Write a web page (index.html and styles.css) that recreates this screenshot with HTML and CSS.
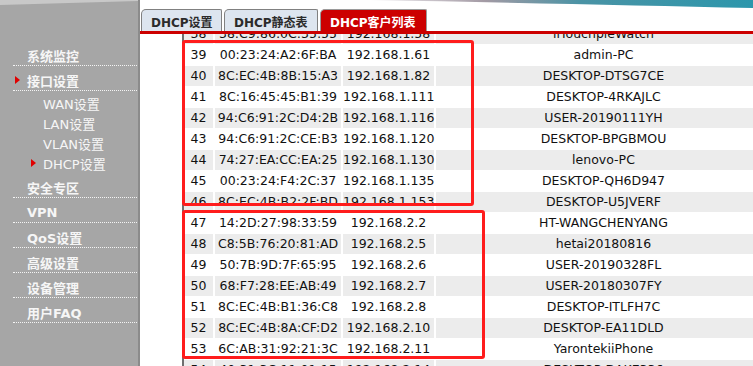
FILE: index.html
```html
<!DOCTYPE html>
<html lang="zh-CN">
<head>
    <meta charset="UTF-8">
    <title>DHCP客户列表</title>
    <link rel="stylesheet" href="styles.css">
</head>
<body>
    <div class="side">
        <svg class="side-deco" width="138" height="6" viewBox="0 0 138 6"><polygon points="0,0 138,0 138,1 0,5" fill="#c8c8c8"/></svg>
        <ul class="menu">
            <li class="menu-item">系统监控</li>
            <li class="menu-item arrow">接口设置</li>
            <li class="sub">
                <div class="sub-item">WAN设置</div>
                <div class="sub-item">LAN设置</div>
                <div class="sub-item">VLAN设置</div>
                <div class="sub-item arrow">DHCP设置</div>
            </li>
            <li class="menu-item">安全专区</li>
            <li class="menu-item">VPN</li>
            <li class="menu-item">QoS设置</li>
            <li class="menu-item">高级设置</li>
            <li class="menu-item">设备管理</li>
            <li class="menu-item">用户FAQ</li>
        </ul>
    </div>
    <div class="main">
        <svg class="banner" width="613" height="9" viewBox="0 0 613 9">
            <defs>
                <linearGradient id="bn" x1="0" y1="0" x2="1" y2="0">
                    <stop offset="0" stop-color="#f2f0f3"/>
                    <stop offset="0.3" stop-color="#a39aa4"/>
                    <stop offset="0.55" stop-color="#4a93a5"/>
                    <stop offset="1" stop-color="#2c97ac"/>
                </linearGradient>
            </defs>
            <path d="M230 0 L613 0 L613 8 Q440 4 230 0 Z" fill="url(#bn)"/>
        </svg>
        <div class="tabs">
            <div class="tab t1">DHCP设置</div>
            <div class="tab t2">DHCP静态表</div>
            <div class="tab t3 active">DHCP客户列表</div>
        </div>
        <div class="tab-line"></div>
        <div class="content">
            <div class="gutter"></div>
            <div class="frame">
                <table class="clients">
                    <tbody>
                        <tr><td>38</td><td>38:C9:86:0C:35:55</td><td>192.168.1.58</td><td>liTouchpleWatch</td></tr>
                        <tr><td>39</td><td>00:23:24:A2:6F:BA</td><td>192.168.1.61</td><td>admin-PC</td></tr>
                        <tr><td>40</td><td>8C:EC:4B:8B:15:A3</td><td>192.168.1.82</td><td>DESKTOP-DTSG7CE</td></tr>
                        <tr><td>41</td><td>8C:16:45:45:B1:39</td><td>192.168.1.111</td><td>DESKTOP-4RKAJLC</td></tr>
                        <tr><td>42</td><td>94:C6:91:2C:D4:2B</td><td>192.168.1.116</td><td>USER-20190111YH</td></tr>
                        <tr><td>43</td><td>94:C6:91:2C:CE:B3</td><td>192.168.1.120</td><td>DESKTOP-BPGBMOU</td></tr>
                        <tr><td>44</td><td>74:27:EA:CC:EA:25</td><td>192.168.1.130</td><td>lenovo-PC</td></tr>
                        <tr><td>45</td><td>00:23:24:F4:2C:37</td><td>192.168.1.135</td><td>DESKTOP-QH6D947</td></tr>
                        <tr><td>46</td><td>8C:EC:4B:B2:2F:BD</td><td>192.168.1.153</td><td>DESKTOP-U5JVERF</td></tr>
                        <tr><td>47</td><td>14:2D:27:98:33:59</td><td>192.168.2.2</td><td>HT-WANGCHENYANG</td></tr>
                        <tr><td>48</td><td>C8:5B:76:20:81:AD</td><td>192.168.2.5</td><td>hetai20180816</td></tr>
                        <tr><td>49</td><td>50:7B:9D:7F:65:95</td><td>192.168.2.6</td><td>USER-20190328FL</td></tr>
                        <tr><td>50</td><td>68:F7:28:EE:AB:49</td><td>192.168.2.7</td><td>USER-20180307FY</td></tr>
                        <tr><td>51</td><td>8C:EC:4B:B1:36:C8</td><td>192.168.2.8</td><td>DESKTOP-ITLFH7C</td></tr>
                        <tr><td>52</td><td>8C:EC:4B:8A:CF:D2</td><td>192.168.2.10</td><td>DESKTOP-EA11DLD</td></tr>
                        <tr><td>53</td><td>6C:AB:31:92:21:3C</td><td>192.168.2.11</td><td>YarontekiiPhone</td></tr>
                        <tr><td>54</td><td>40:31:3C:11:01:15</td><td>192.168.2.14</td><td>DESKTOP-DAKE336</td></tr>
                    </tbody>
                </table>
            </div>
            <div class="mark mark-1"></div>
            <div class="mark mark-2"></div>
        </div>
    </div>
</body>
</html>
```

FILE: styles.css
```css
body {
    margin: 0;
    width: 753px;
    height: 366px;
    overflow: hidden;
    display: flex;
    background: #fff;
    font-family: "DejaVu Sans", "Noto Sans CJK SC", sans-serif;
    font-size: 12px;
    color: #111;
}

/* left menu */
.side {
    width: 138px;
    flex-shrink: 0;
    background: #a6a6a6;
    border-right: 2px solid #8b8b8b;
}
.side-deco {
    display: block;
}
.menu {
    list-style: none;
    margin: 35px 1px 0 13px;
    padding: 0;
    color: #f6f6f6;
    font-size: 13px;
}
.menu-item {
    display: flex;
    align-items: center;
    height: 20px;
    padding: 4px 0 0 14px;
    border-bottom: 1px dotted #f4f4f4;
    font-weight: bold;
}
.sub {
    padding-top: 2px;
}
.sub-item {
    display: flex;
    align-items: center;
    height: 20px;
    padding-left: 30px;
}
.menu-item.arrow {
    padding-left: 2px;
}
.sub-item.arrow {
    padding-left: 18px;
}
.arrow::before {
    content: "";
    width: 0;
    height: 0;
    margin-right: 7px;
    border-left: 5px solid #e00000;
    border-top: 4px solid transparent;
    border-bottom: 4px solid transparent;
}

/* right side */
.main {
    flex: 1;
    display: flex;
    flex-direction: column;
    min-width: 0;
}
.banner {
    display: block;
    flex-shrink: 0;
}
.tabs {
    display: flex;
    align-items: flex-end;
    gap: 2px;
    height: 22px;
    padding-left: 1px;
}
.tab {
    box-sizing: border-box;
    height: 22px;
    padding: 3px 0 0 9px;
    border: 1px solid #808080;
    border-bottom: none;
    border-radius: 5px 2px 0 0;
    background: #dde5ef;
    color: #2b2b2b;
    font-weight: bold;
    white-space: nowrap;
}
.t1 { width: 81px; }
.t2 { width: 94px; }
.t3 { width: 107px; }
.tab.active {
    background: #cc0000;
    border-color: #9a9a9a;
    color: #fff;
}
.tab-line {
    height: 3px;
    background: #cc0000;
    flex-shrink: 0;
}

.content {
    position: relative;
    flex: 1;
    display: flex;
    overflow: hidden;
}
.gutter {
    width: 42px;
    flex-shrink: 0;
}
.frame {
    border-left: 2px solid #6f6f6f;
    overflow: hidden;
}
.clients {
    width: 589px;
    margin-top: -11px;
    border-collapse: collapse;
    table-layout: fixed;
    font-size: 12.5px;
}
.clients td {
    box-sizing: border-box;
    height: 21px;
    padding: 0;
    border-right: 2px solid #fff;
    border-bottom: 1px solid #fff;
    text-align: center;
    white-space: nowrap;
}
.clients td:nth-child(1) { width: 30px; }
.clients td:nth-child(2) { width: 128px; }
.clients td:nth-child(3) { width: 93px; }
.clients tr:nth-child(odd) td {
    background: #ececec;
}

/* red annotation boxes drawn over the list */
.mark {
    position: absolute;
    border: 3px solid #ff1c1c;
    border-radius: 3px;
}
.mark-1 {
    left: 42px;
    top: 6px;
    width: 286px;
    height: 160px;
}
.mark-2 {
    left: 42px;
    top: 176px;
    width: 297px;
    height: 143px;
}
```
